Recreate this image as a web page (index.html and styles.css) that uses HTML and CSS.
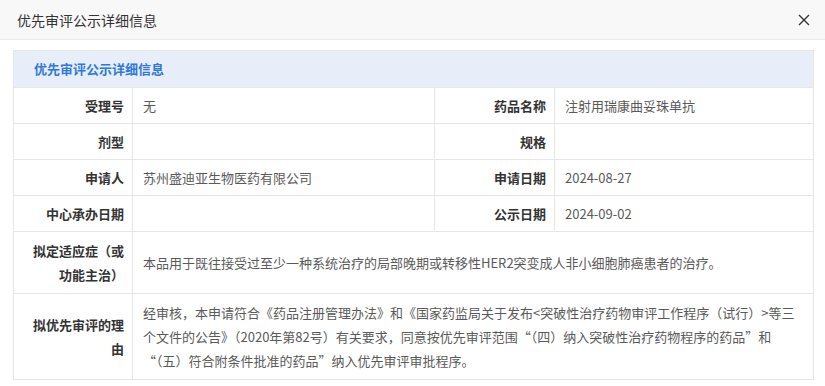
FILE: index.html
```html
<!DOCTYPE html>
<html lang="zh-CN">
<head>
<meta charset="utf-8">
<title>优先审评公示详细信息</title>
<link rel="stylesheet" href="styles.css">
</head>
<body>
<div class="dialog">
  <div class="dialog-head">
    <span class="dialog-title">优先审评公示详细信息</span>
    <span class="close" aria-label="关闭">
      <svg width="12" height="12" viewBox="0 0 12 12"><path d="M1 1L11 11M11 1L1 11" stroke="#333" stroke-width="1.4" fill="none"/></svg>
    </span>
  </div>
  <div class="dialog-body">
    <table class="info">
      <colgroup>
        <col class="c-label"><col class="c-val1"><col class="c-label2"><col class="c-val2">
      </colgroup>
      <tr><th class="caption" colspan="4">优先审评公示详细信息</th></tr>
      <tr><td class="lbl">受理号</td><td class="val">无</td><td class="lbl">药品名称</td><td class="val">注射用瑞康曲妥珠单抗</td></tr>
      <tr><td class="lbl">剂型</td><td class="val"></td><td class="lbl">规格</td><td class="val"></td></tr>
      <tr><td class="lbl">申请人</td><td class="val">苏州盛迪亚生物医药有限公司</td><td class="lbl">申请日期</td><td class="val">2024-08-27</td></tr>
      <tr><td class="lbl">中心承办日期</td><td class="val"></td><td class="lbl">公示日期</td><td class="val">2024-09-02</td></tr>
      <tr class="tall"><td class="lbl">拟定适应症（或功能主治）</td><td class="val" colspan="3">本品用于既往接受过至少一种系统治疗的局部晚期或转移性HER2突变成人非小细胞肺癌患者的治疗。</td></tr>
      <tr class="tall"><td class="lbl">拟优先审评的理由</td><td class="val" colspan="3">经审核，本申请符合《药品注册管理办法》和《国家药监局关于发布&lt;突破性治疗药物审评工作程序（试行）&gt;等三个文件的公告》（2020年第82号）有关要求，同意按优先审评范围“（四）纳入突破性治疗药物程序的药品”和“（五）符合附条件批准的药品”纳入优先审评审批程序。</td></tr>
    </table>
  </div>
</div>
</body>
</html>
```

FILE: styles.css
```css
html, body {
  margin: 0;
  padding: 0;
  background: #fff;
  font-family: "Noto Sans CJK SC", "Noto Sans", sans-serif;
}
.dialog-head {
  height: 39px;
  background: #f8f8f8;
  border-bottom: 1px solid #eaeaea;
  display: flex;
  align-items: center;
  justify-content: space-between;
  padding: 0 15px 0 17px;
}
.dialog-title {
  font-size: 14px;
  color: #333;
}
.close {
  display: flex;
  width: 12px;
  height: 12px;
}
.dialog-body {
  padding: 10px 12px 0 13px;
}
.info {
  width: 800px;
  border-collapse: collapse;
  table-layout: fixed;
  font-size: 13px;
  line-height: 24px;
}
.c-label { width: 119px; }
.c-val1 { width: 302px; }
.c-label2 { width: 120px; }
.c-val2 { width: 259px; }
.info th, .info td {
  border: 1px solid #e6e6e6;
}
.caption {
  background: #e8eef9;
  color: #2f78dc;
  font-weight: bold;
  text-align: left;
  padding: 6px 20px 6px 20px;
  height: 24px;
}
.lbl {
  text-align: right;
  font-weight: bold;
  color: #333;
  padding: 6px 8px 5px 16px;
}
.val {
  color: #5a5a5a;
  padding: 6px 14px 5px 10px;
}
.tall .lbl, .tall .val {
  padding-top: 7px;
  padding-bottom: 6px;
}
```
